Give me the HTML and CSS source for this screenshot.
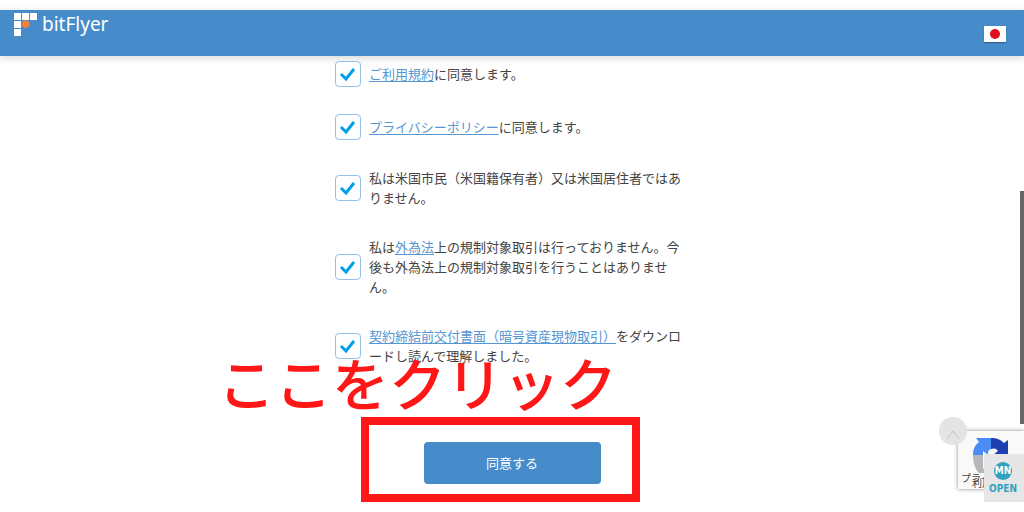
FILE: index.html
```html
<!DOCTYPE html>
<html lang="ja">
<head>
<meta charset="utf-8">
<meta name="viewport" content="width=device-width, initial-scale=1">
<title>bitFlyer</title>
<link rel="stylesheet" href="styles.css">
</head>
<body>
<header class="header">
  <a class="brand" href="#">
    <svg class="brand-mark" viewBox="0 0 24 24" aria-hidden="true">
      <path fill="#fff" d="M0 1h7v7H0zM8 1h7v7H8zM16 1h7v7h-7zM0 9h7v7H0zM0 17h7v7H0z"/>
      <circle cx="11.7" cy="12.2" r="3.7" fill="#f5803a"/>
    </svg>
    <span>bitFlyer</span>
  </a>
  <button class="language" type="button" aria-label="日本語">
    <svg viewBox="0 0 22 16" aria-hidden="true"><path fill="#fff" d="M0 0h22v16H0z"/><circle cx="11" cy="8" r="5" fill="#e0101c"/></svg>
  </button>
</header>
<main class="main">
  <form class="consent">
    <div class="row"><input class="check" type="checkbox" id="terms" checked><label for="terms"><a href="#">ご利用規約</a>に同意します。</label></div>
    <div class="row"><input class="check" type="checkbox" id="privacy" checked><label for="privacy"><a href="#">プライバシーポリシー</a>に同意します。</label></div>
    <div class="row"><input class="check" type="checkbox" id="us" checked><label for="us">私は米国市民（米国籍保有者）又は米国居住者ではありません。</label></div>
    <div class="row"><input class="check" type="checkbox" id="exchange" checked><label for="exchange">私は<a href="#">外為法</a>上の規制対象取引は行っておりません。今後も外為法上の規制対象取引を行うことはありません。</label></div>
    <div class="row"><input class="check" type="checkbox" id="contract" checked><label for="contract"><a href="#">契約締結前交付書面（暗号資産現物取引）</a>をダウンロードし読んで理解しました。</label></div>
    <div class="action">
      <p class="callout">ここをクリック</p>
      <div class="frame"></div>
      <button class="submit" type="submit">同意する</button>
    </div>
  </form>
</main>
<div class="scroll-thumb"></div>
<aside class="recaptcha">
  <svg class="recaptcha-mark" viewBox="0 0 36 36" aria-hidden="true">
    <path fill="#b5b7ba" d="M0 18h10v14l5-4 3 4v4H6c-4-4-6-10-6-18z"/>
    <path fill="#4a8cf5" d="M0 18C0 12 2 8 6 5L3 1h15v11c-3 1-3 3-3 6l-5-4v4z"/>
    <path fill="#1d3fb0" d="M18 1c5 0 9 1 13 5l4-3v15H20l5-4c-2-3-4-3-7-2z"/>
  </svg>
  <span class="recaptcha-privacy">プライバシー</span>
  <span class="recaptcha-terms">利用規約</span>
</aside>
<button class="to-top" type="button" aria-label="ページの先頭へ"><svg viewBox="0 0 28 28" aria-hidden="true"><path d="M8 22l6-8 6 8" fill="none" stroke="#c4c4c4"/></svg></button>
<button class="open" type="button">
  <span class="open-mark">MN</span>
  <span>OPEN</span>
</button>
</body>
</html>
```
FILE: styles.css
```css
* { box-sizing: border-box; }
body {
  margin: 0;
  padding-top: 10px;
  min-height: 100vh;
  position: relative;
  overflow: hidden;
  background: #fff;
  color: #444;
  font-family: "Noto Sans CJK JP", sans-serif;
  font-size: 13px;
  line-height: 20px;
}
button { border: 0; padding: 0; font: inherit; cursor: pointer; }
.header {
  display: flex;
  justify-content: space-between;
  padding: 2px 18px 0 14px;
  height: 46px;
  background: #468ccb;
  box-shadow: 0 2px 8px rgba(0, 0, 0, 0.16);
}
.brand {
  display: flex;
  gap: 4px;
  height: 24px;
  color: #fff;
  font-family: "Noto Sans", sans-serif;
  font-size: 19px;
  line-height: 24px;
  text-decoration: none;
}
.brand-mark { width: 24px; height: 24px; }
.language {
  align-self: center;
  width: 22px;
  height: 16px;
  background: none;
  box-shadow: 0 1px 1px rgba(0, 0, 0, 0.3);
}
.language svg { display: block; }
.main { display: flex; justify-content: center; padding-top: 6px; }
.consent {
  display: flex;
  flex-direction: column;
  gap: 29px;
  width: 354px;
}
.row { display: flex; align-items: center; gap: 8px; min-height: 24px; }
.row label { flex: 1; line-break: loose; }
.row a { color: #5596d3; text-decoration: underline; text-underline-offset: 2px; }
.check {
  appearance: none;
  flex: none;
  width: 26px;
  height: 26px;
  margin: -1px 0;
  border: 1px solid #94bfe8;
  border-radius: 4px;
  background: #fff;
}
.check:checked {
  background: #fff url("data:image/svg+xml,%3Csvg xmlns='http://www.w3.org/2000/svg' viewBox='0 0 24 24'%3E%3Cpath d='M5 12l5 5 8-10' fill='none' stroke='%2300a0e9' stroke-width='3'/%3E%3C/svg%3E") center / 100%;
}
.action {
  position: relative;
  display: flex;
  justify-content: center;
  padding-top: 47px;
}
.submit {
  width: 50%;
  height: 42px;
  border-radius: 4px;
  background: #468ccb;
  color: #fff;
}
.frame {
  position: absolute;
  top: 22px;
  left: 26px;
  width: 279px;
  height: 85px;
  border: 8px solid #ff1616;
  pointer-events: none;
}
.callout {
  position: absolute;
  top: -49px;
  left: -117px;
  margin: 0;
  color: #ff1616;
  font-size: 57px;
  font-weight: 500;
  line-height: 70px;
  white-space: nowrap;
}
.scroll-thumb {
  position: absolute;
  top: 191px;
  right: 0;
  width: 4px;
  height: 233px;
  background: #666;
}
.recaptcha {
  position: absolute;
  right: 0;
  bottom: 23px;
  width: 66px;
  height: 58px;
  overflow: hidden;
  background: #f9f9f9;
  box-shadow: 0 0 4px #888;
  font-size: 10px;
  line-height: 12px;
  white-space: nowrap;
}
.recaptcha-mark { position: absolute; top: 6px; left: 15px; width: 36px; height: 36px; }
.recaptcha-privacy { position: absolute; top: 41px; left: 3px; }
.recaptcha-terms { position: absolute; top: 46px; left: 14px; }
.to-top {
  position: absolute;
  right: 57px;
  bottom: 67px;
  width: 28px;
  height: 28px;
  border-radius: 50%;
  background: #e4e4e4;
}
.to-top svg { display: block; }
.open {
  position: absolute;
  right: 0;
  bottom: 10px;
  display: flex;
  flex-direction: column;
  align-items: center;
  width: 40px;
  height: 48px;
  padding: 8px 2px 0 0;
  background: #e6e6e6;
  color: #2fa3bd;
  font-family: "Liberation Sans Narrow", "DejaVu Sans Condensed", sans-serif;
  font-size: 10px;
  font-weight: 700;
  line-height: 18px;
}
.open-mark {
  display: flex;
  justify-content: center;
  width: 18px;
  height: 18px;
  border-radius: 50%;
  background: #2fa3bd;
  color: #fff;
}
```
